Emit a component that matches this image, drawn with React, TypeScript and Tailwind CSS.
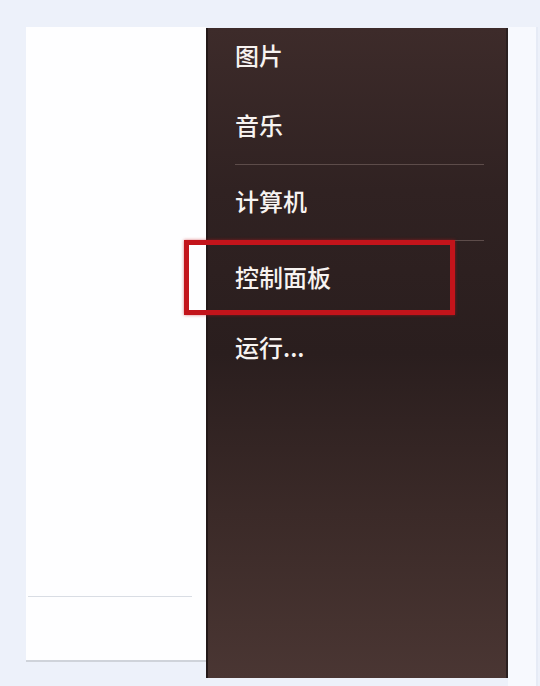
import React from "react";

const font = { fontFamily: '"Noto Sans CJK SC", "Noto Sans", sans-serif' };

export default function App() {
  return (
    <div
      className="relative w-[540px] h-[686px] bg-[#edf1fa] flex pt-[27px] pl-[26px] overflow-hidden"
      style={font}
    >
      {/* left white panel */}
      <div className="w-[180px] h-[635px] bg-[#fefeff] flex flex-col justify-end">
        <div className="h-px w-[164px] ml-[2px] bg-[#d9dde4]" />
        <div className="h-[63px]" />
        <div className="h-[2px] w-full bg-[#cfd3da]" />
      </div>

      {/* dark panel */}
      <div className="w-[302px] h-[650px] mt-[1px] border-l-2 border-r-2 border-l-[#231818] border-r-[#2a2020] bg-[linear-gradient(180deg,#3d2b2a_0%,#302222_25%,#2a1e1e_50%,#3b2a28_75%,#4a3633_100%)] flex flex-col pl-[27px] pr-[22px] text-[#f7f3f1] text-[24px] font-medium leading-none">
        <div className="h-[62px] pb-[8px] flex items-center">图片</div>
        <div className="h-[70px] flex items-center">音乐</div>
        <div className="mt-[4px] h-px bg-[#5d4c4a] mb-[1px]" />
        <div className="h-[70px] flex items-center">计算机</div>
        <div className="mt-[4px] h-px bg-[#5d4c4a] mb-[1px]" />
        <div className="h-[70px] flex items-center">控制面板</div>
        <div className="h-[70px] flex items-center">运行...</div>
      </div>

      {/* right strip */}
      <div className="w-[30px] h-[659px] bg-[#f7f9fe] border-r-2 border-r-[#e6ebf6]" />

      {/* red highlight box */}
      <div className="absolute left-[184px] top-[240px] w-[271px] h-[75px] border-[5px] border-[#c3141b] shadow-[0_0_3px_rgba(195,20,27,0.6)]" />
    </div>
  );
}
